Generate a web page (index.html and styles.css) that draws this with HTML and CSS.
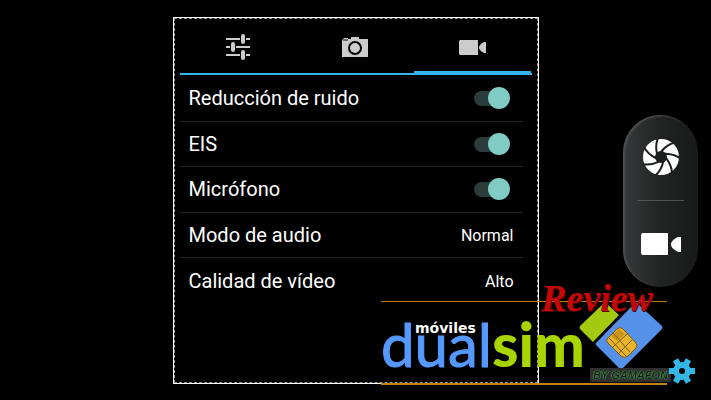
FILE: index.html
```html
<!DOCTYPE html>
<html lang="es">
<head>
  <meta charset="UTF-8" />
  <meta name="viewport" content="width=device-width, initial-scale=1.0"/>
  <title>Ajustes de vídeo</title>
  <link rel="stylesheet" href="styles.css">
</head>
<body>

  <main class="screen">
    <section class="panel">
      <nav class="tabs" role="tablist">
        <button class="tab" role="tab" aria-label="General">
          <svg width="24" height="26" viewBox="0 0 24 26" fill="none" stroke="#ccc" stroke-width="2">
            <path d="M0 5h14M20 5h4M0 13h4M10 13h14M0 21h14M20 21h4"/>
            <path d="M17 2v6M7 10v6M17 18v6" stroke-width="4" stroke-linecap="round"/>
          </svg>
        </button>
        <button class="tab" role="tab" aria-label="Foto">
          <svg width="26" height="20" viewBox="0 0 26 20">
            <path d="M0 3l2-2h4v1h3V0h8v2h9v18H0z" fill="#ccc"/>
            <path d="M1 3h5" stroke="#000" stroke-width="1"/>
            <circle cx="13" cy="11" r="6" fill="#ccc" stroke="#000" stroke-width="2"/>
          </svg>
        </button>
        <button class="tab active" role="tab" aria-selected="true" aria-label="Vídeo">
          <svg width="27" height="15" viewBox="0 0 27 15" fill="#ccc">
            <path d="M1 0h18v15H1l-1-1V1z"/>
            <path d="M27 2v11h-2c-2-1-5-3-5-5.500s3-4.500 5-5.500z"/>
          </svg>
        </button>
      </nav>

      <div class="settings">
        <div class="row">
          <label for="ruido">Reducción de ruido</label>
          <input class="switch" type="checkbox" id="ruido" checked>
        </div>
        <div class="row">
          <label for="eis">EIS</label>
          <input class="switch" type="checkbox" id="eis" checked>
        </div>
        <div class="row">
          <label for="microfono">Micrófono</label>
          <input class="switch" type="checkbox" id="microfono" checked>
        </div>
        <div class="row">
          <label for="audio">Modo de audio</label>
          <select class="value" id="audio"><option>Normal</option></select>
        </div>
        <div class="row">
          <label for="calidad">Calidad de vídeo</label>
          <select class="value" id="calidad"><option>Alto</option></select>
        </div>
      </div>
    </section>

    <aside class="capture">
      <button class="capture-btn" aria-label="Hacer foto">
        <svg width="36" height="36" viewBox="-18 -18 36 36">
          <circle r="18" fill="#fff"/>
          <circle r="6" fill="#1d1f1f"/>
          <g fill="none" stroke="#1d1f1f" stroke-width="2">
            <path id="blade" d="M-3-19Q-6-12-4-3"/>
            <use href="#blade" transform="rotate(51.430)"/>
            <use href="#blade" transform="rotate(102.860)"/>
            <use href="#blade" transform="rotate(154.290)"/>
            <use href="#blade" transform="rotate(205.710)"/>
            <use href="#blade" transform="rotate(257.140)"/>
            <use href="#blade" transform="rotate(308.570)"/>
          </g>
        </svg>
      </button>
      <button class="capture-btn" aria-label="Grabar vídeo">
        <svg width="40" height="22" viewBox="0 0 40 22" fill="#fff">
          <path d="M2 0h25v22H2q-2 0-2-3V3q0-3 2-3z"/>
          <path d="M40 4v15h-3c-3-2-7-4-7-7.500s4-6 7-7.500z"/>
        </svg>
      </button>
    </aside>
  </main>

  <div class="brand">
    <svg class="sim" width="90" height="70" viewBox="576 300 90 70">
      <path d="M580 326l23-22q2-2 4 0l12 11-26 27-13-13q-1-1 0-3z" fill="#a3c911"/>
      <path d="M596 343l38-39q2-2 4 0l24 22q1 1 0 3l-39 39q-2 2-4 0l-23-23q-1-1 0-2z" fill="#5591e8"/>
      <path d="M607 339l10-10q3-3 6 0l13 14q2 2 0 5l-8 8q-4 3-7 0l-13-13q-2-2-1-4z" fill="#eab32c" stroke="#7b5a0c"/>
      <path d="M611 336l8-7 6 5-8 7z" fill="#c8951c"/>
      <path d="M613 347l14-13M619 353l13-13M613 333l17 19M609 338l17 18" fill="none" stroke="#7b5a0c"/>
    </svg>
    <span class="review">Review</span>
    <span class="moviles">móviles</span>
    <div class="wordmark"><span class="dual">dual</span><span class="simtext">sim</span></div>
    <span class="tag">BY GAMAFON</span>
  </div>

  <button class="gear" aria-label="Ajustes">
    <svg width="26" height="26" viewBox="-13 -13 26 26">
      <g fill="#33b5e5">
        <circle r="9"/>
        <path id="teeth" d="M-13-3H13V3H-13z"/>
        <use href="#teeth" transform="rotate(60)"/>
        <use href="#teeth" transform="rotate(120)"/>
      </g>
      <circle r="3" fill="#000"/>
    </svg>
  </button>

</body>
</html>
```

FILE: styles.css
```css
* {
  box-sizing: border-box;
  margin: 0;
  padding: 0;
  font-family: Roboto, sans-serif;
}

body {
  background: #000;
  color: #fff;
  overflow: hidden;
}

button {
  background: none;
  border: none;
  cursor: pointer;
}

svg {
  display: block;
}

.screen {
  display: grid;
  grid-template-columns: 1fr minmax(0, 366px) 1fr;
  align-items: center;
  min-height: 100vh;
  padding: 17px 0 16px;
}

.panel {
  grid-column: 2;
  align-self: stretch;
  border: 1px solid #fff;
  outline: 1px dashed #999;
  outline-offset: -2px;
  padding: 0 6px;
}

.tabs {
  display: flex;
  border-bottom: 2px solid #33b5f0;
}

.tab {
  flex: 1;
  height: 55px;
  display: flex;
  align-items: center;
  justify-content: center;
  padding-top: 3px;
}

.tab.active {
  box-shadow: inset 0 -2px #33b5f0;
}

.settings {
  display: grid;
  grid-template-rows: repeat(5, 1fr);
  height: 57vh;
  margin: 1px 9px 0 0;
}

.row {
  display: flex;
  align-items: center;
  justify-content: space-between;
  padding: 0 9px;
  border-bottom: 1px solid #222;
  font-size: 20px;
}

.row:last-child {
  border-bottom: none;
}

.switch {
  appearance: none;
  position: relative;
  width: 36px;
  height: 22px;
  margin-right: 4px;
  cursor: pointer;
}

.switch::before {
  content: "";
  position: absolute;
  inset: 4px 4px 3px 0;
  border-radius: 8px;
  background: #2a3d3b;
}

.switch::after {
  content: "";
  position: absolute;
  top: 0;
  left: 0;
  width: 22px;
  height: 22px;
  border-radius: 50%;
  background: #aaa;
}

.switch:checked::after {
  left: 14px;
  background: #80cbc4;
}

.value {
  appearance: none;
  background: none;
  border: none;
  color: #fff;
  font-size: 16px;
  text-align-last: right;
}

/* shutter and record */
.capture {
  justify-self: end;
  display: flex;
  flex-direction: column;
  width: 75px;
  height: 172px;
  margin-right: 13px;
  padding: 0 14px;
  border-radius: 38px;
  background: linear-gradient(to right, #363939, #222424 50%, #181a1a);
  box-shadow: inset 2px 1px 2px #4c5050;
}

.capture-btn {
  flex: 1;
  display: flex;
  align-items: center;
  justify-content: center;
}

.capture-btn + .capture-btn {
  border-top: 1px solid #505353;
}

/* watermark on top of the screen */
.brand {
  position: absolute;
  right: 44px;
  bottom: 15px;
  width: 286px;
  height: 84px;
  border-top: 1px solid #b8800c;
  border-bottom: 2px solid #bd8416;
}

.wordmark {
  font-size: 60px;
  line-height: 60px;
  padding-top: 12px;
  white-space: nowrap;
}

.wordmark span {
  font-family: Lato, sans-serif;
}

.dual {
  color: #5599ff;
  -webkit-text-stroke: 1px #5599ff;
}

.simtext {
  color: #a8d400;
  font-weight: 900;
}

.moviles {
  position: absolute;
  top: 18px;
  left: 34px;
  font: bold 14px/16px "DejaVu Sans", sans-serif;
}

.sim {
  position: absolute;
  top: -2px;
  right: 1px;
}

.review {
  position: absolute;
  top: -24px;
  left: 160px;
  font: italic bold 38px/40px "Liberation Serif", serif;
  color: #c40808;
  text-shadow: 1px 1px #500;
}

.tag {
  position: absolute;
  right: -4px;
  bottom: 1px;
  padding: 0 3px;
  background: #303030;
  color: #0c2410;
  font: italic bold 11px/14px "Liberation Sans", sans-serif;
  text-shadow: 0 0 1px #6bc074, 0 0 1px #6bc074;
}

.gear {
  position: absolute;
  right: 16px;
  bottom: 16px;
}
```
